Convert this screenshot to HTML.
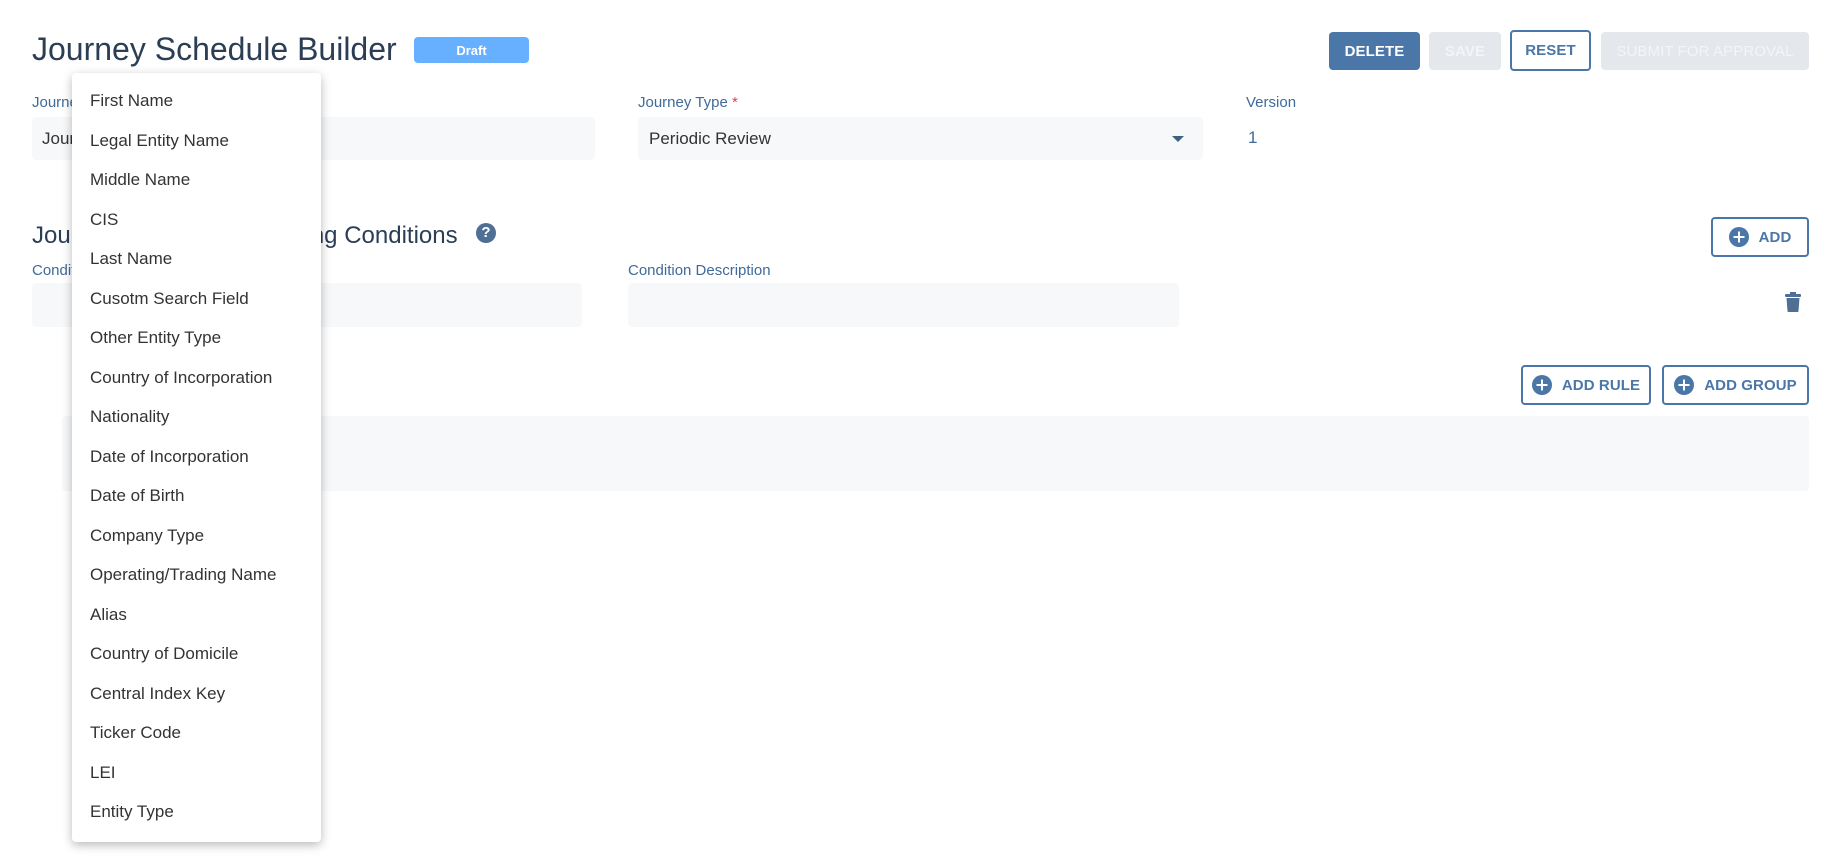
<!DOCTYPE html>
<html><head><meta charset="utf-8"><style>
*{box-sizing:border-box;margin:0;padding:0}
body{width:1836px;height:856px;background:#fff;position:relative;overflow:hidden;font-family:"Liberation Sans",sans-serif}
.a{position:absolute}
.lbl{font-size:15px;color:#3f6a9a}
.fld{background:#f7f8fa;border-radius:4px}
.btn{position:absolute;border-radius:4px;font-size:15px;display:flex;align-items:center;justify-content:center;font-weight:600;letter-spacing:0.1px}
.ob{border:2px solid #4a76a8;color:#4a76a8;background:#fff}
.dd{left:72px;top:73px;width:249px;height:769px;background:#fff;border-radius:4px;box-shadow:0 3px 10px rgba(0,0,0,.28)}
.it{position:absolute;left:18px;font-size:17px;color:#333;line-height:20px}
.plus{display:inline-block;width:20px;height:20px;border-radius:50%;background:#4a76a8;position:relative;margin-right:10px}
.plus:before,.plus:after{content:"";position:absolute;background:#fff;left:50%;top:50%;transform:translate(-50%,-50%)}
.plus:before{width:11px;height:2px}.plus:after{width:2px;height:11px}
</style></head><body>
<div class="a" style="left:32px;top:31px;font-size:32px;color:#2c3e55">Journey Schedule Builder</div>
<div class="a" style="left:414px;top:37px;width:115px;height:26px;background:#66b0ff;border-radius:4px;color:#fff;font-size:13px;font-weight:bold;display:flex;align-items:center;justify-content:center">Draft</div>
<div class="btn" style="left:1329px;top:32px;width:91px;height:38px;background:#4a76a8;color:#fff">DELETE</div>
<div class="btn" style="left:1429px;top:32px;width:72px;height:38px;background:#e4e7eb;color:#f4f5f7">SAVE</div>
<div class="btn ob" style="left:1510px;top:30px;width:81px;height:41px">RESET</div>
<div class="btn" style="left:1601px;top:32px;width:208px;height:38px;background:#e4e7eb;color:#f4f5f7;font-weight:normal">SUBMIT FOR APPROVAL</div>

<div class="a lbl" style="left:32px;top:94px">Journey Schedule Name</div>
<div class="a fld" style="left:32px;top:117px;width:563px;height:43px"></div>
<div class="a" style="left:42px;top:129px;font-size:17px;color:#333">Journey</div>
<div class="a lbl" style="left:638px;top:94px">Journey Type <span style="color:#e04050">*</span></div>
<div class="a fld" style="left:638px;top:117px;width:565px;height:43px"></div>
<div class="a" style="left:649px;top:129px;font-size:17px;color:#333">Periodic Review</div>
<div class="a" style="left:1172px;top:136px;width:0;height:0;border-left:6px solid transparent;border-right:6px solid transparent;border-top:6px solid #3f5f85"></div>
<div class="a lbl" style="left:1246px;top:94px">Version</div>
<div class="a" style="left:1248px;top:128px;font-size:17px;color:#3f6a9a">1</div>

<div class="a" style="left:32px;top:222px;font-size:24px;color:#2c3e55">Journey Schedule Triggering Conditions</div>
<div class="a" style="left:476px;top:223px;width:20px;height:20px;border-radius:50%;background:#4f6f94;color:#fff;font-size:15px;font-weight:bold;text-align:center;line-height:20px">?</div>
<div class="btn ob" style="left:1711px;top:217px;width:98px;height:40px"><span class="plus"></span>ADD</div>

<div class="a lbl" style="left:32px;top:262px">Condition Name</div>
<div class="a fld" style="left:32px;top:283px;width:550px;height:44px"></div>
<div class="a lbl" style="left:628px;top:262px">Condition Description</div>
<div class="a fld" style="left:628px;top:283px;width:551px;height:44px"></div>
<svg class="a" style="left:1785px;top:292px" width="16" height="20" viewBox="0 0 16 20"><rect x="0" y="2" width="16" height="3" rx="1" fill="#4f6f94"/><rect x="5" y="0" width="6" height="3" fill="#4f6f94"/><path d="M1.5 6h13l-1 13a1 1 0 0 1-1 1h-9a1 1 0 0 1-1-1z" fill="#4f6f94"/></svg>

<div class="btn ob" style="left:1521px;top:365px;width:130px;height:40px"><span class="plus"></span>ADD RULE</div>
<div class="btn ob" style="left:1662px;top:365px;width:147px;height:40px"><span class="plus"></span>ADD GROUP</div>
<div class="a fld" style="left:62px;top:416px;width:1747px;height:75px"></div>

<div class="a dd">
<div class="it" style="top:18px">First Name</div>
<div class="it" style="top:57.5px">Legal Entity Name</div>
<div class="it" style="top:97px">Middle Name</div>
<div class="it" style="top:136.5px">CIS</div>
<div class="it" style="top:176px">Last Name</div>
<div class="it" style="top:215.5px">Cusotm Search Field</div>
<div class="it" style="top:255px">Other Entity Type</div>
<div class="it" style="top:294.5px">Country of Incorporation</div>
<div class="it" style="top:334px">Nationality</div>
<div class="it" style="top:373.5px">Date of Incorporation</div>
<div class="it" style="top:413px">Date of Birth</div>
<div class="it" style="top:452.5px">Company Type</div>
<div class="it" style="top:492px">Operating/Trading Name</div>
<div class="it" style="top:531.5px">Alias</div>
<div class="it" style="top:571px">Country of Domicile</div>
<div class="it" style="top:610.5px">Central Index Key</div>
<div class="it" style="top:650px">Ticker Code</div>
<div class="it" style="top:689.5px">LEI</div>
<div class="it" style="top:729px">Entity Type</div>
</div>
</body></html>
